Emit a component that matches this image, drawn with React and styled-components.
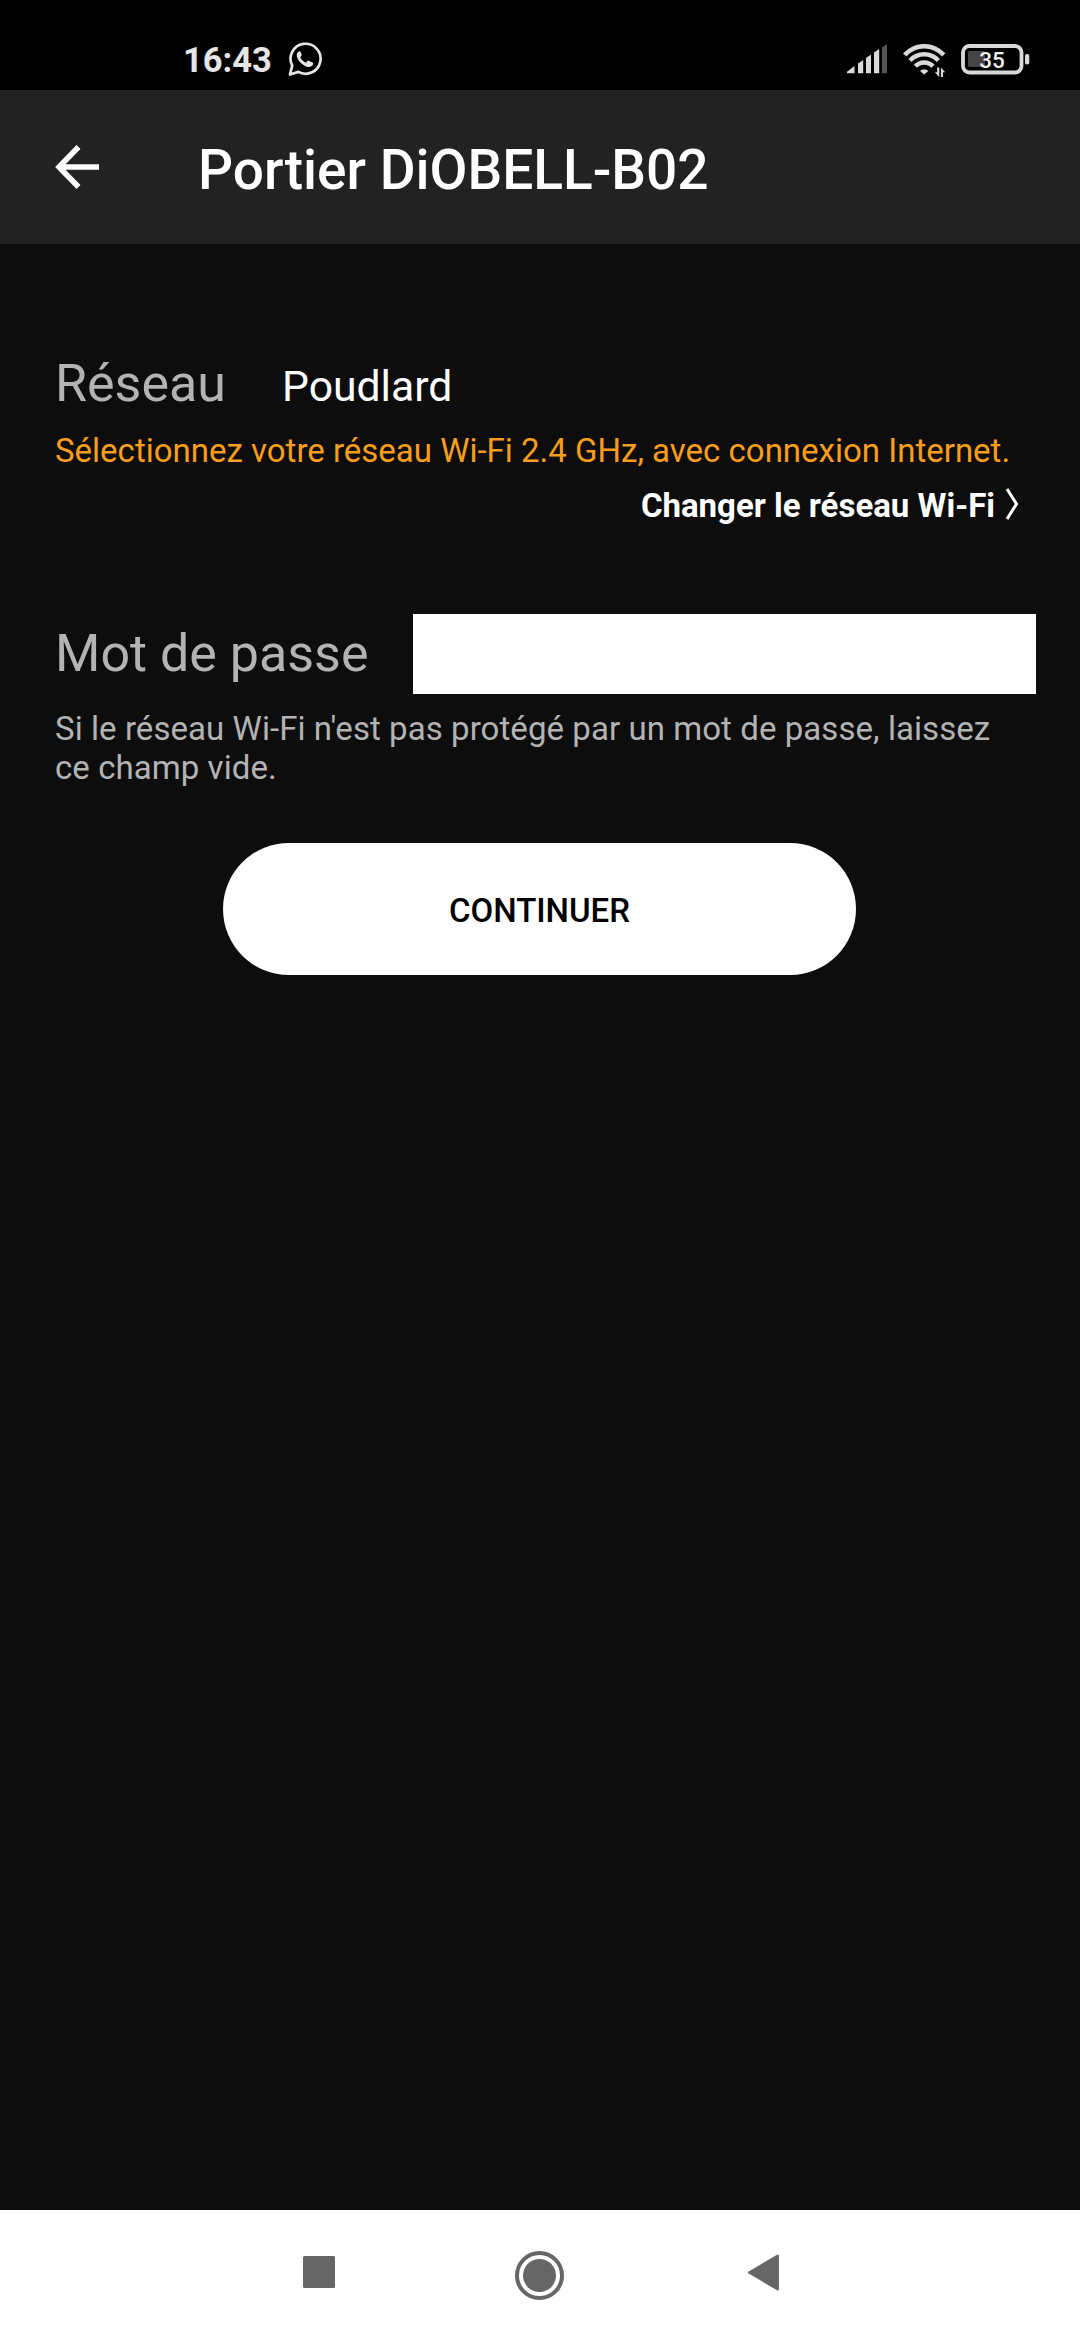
import React from "react";
import styled, { createGlobalStyle } from "styled-components";

const GlobalStyle = createGlobalStyle`
  * { box-sizing: border-box; }
  body { margin: 0; background: #0d0d0d; font-family: Roboto, "Liberation Sans", sans-serif; }
  h1, p { margin: 0; }
`;

const Screen = styled.div`
  width: 1080px;
  height: 2340px;
  display: flex;
  flex-direction: column;
  background: #0d0d0d;
  overflow: hidden;
`;

const StatusBar = styled.header`
  height: 90px;
  flex: none;
  display: flex;
  justify-content: space-between;
  align-items: flex-start;
  padding: 40px 50px 0 183px;
  background: #000;
`;

const StatusGroup = styled.div`
  display: flex;
  align-items: flex-start;
`;

const StatusIcon = styled.span`
  display: flex;
  margin-left: ${(p) => p.$gap}px;
  padding-top: ${(p) => p.$drop}px;
`;

const Clock = styled.span`
  width: 89px;
  font-size: 34.5px;
  font-weight: 700;
  line-height: 40px;
  color: #e6e6e6;
`;

const Toolbar = styled.div`
  height: 154px;
  flex: none;
  display: flex;
  align-items: flex-start;
  gap: 98px;
  padding: 48px 55px 0 55px;
  background: #222;
`;

const IconButton = styled.button`
  border: 0;
  padding: 7px 0 0;
  background: none;
  display: flex;
`;

const Title = styled.h1`
  font-size: 55px;
  font-weight: 500;
  line-height: 64px;
  color: #fff;
`;

const Content = styled.main`
  flex: 1;
  display: flex;
  flex-direction: column;
  padding: 109px 44px 0 55px;
`;

const FieldRow = styled.div`
  display: flex;
  align-items: ${(p) => p.$align};
  height: ${(p) => p.$height}px;
  margin-top: ${(p) => p.$top || 0}px;
`;

const Label = styled.label`
  width: ${(p) => p.$width}px;
  flex: none;
  margin-bottom: 1px;
  font-size: 52px;
  line-height: 61px;
  color: #b3b3b3;
  white-space: nowrap;
`;

const NetworkName = styled.span`
  font-size: 42.7px;
  line-height: 52px;
  color: #fff;
`;

const Note = styled.p`
  max-width: 965px;
  font-size: 33px;
  line-height: 39px;
  letter-spacing: ${(p) => p.$tracking || 0}px;
  margin-top: ${(p) => p.$top}px;
  color: ${(p) => p.$color};
`;

const ChangeLink = styled.a`
  display: flex;
  justify-content: flex-end;
  gap: 10px;
  height: 39px;
  margin-top: 16px;
  padding-right: 17px;
  font-size: 33px;
  font-weight: 700;
  line-height: 39px;
  color: #fff;
`;

const PasswordInput = styled.input`
  width: 623px;
  height: 80px;
  border: 0;
  border-radius: 0;
  padding: 0 12px;
  background: #fff;
  font: 400 44px Roboto, sans-serif;
`;

const ContinueButton = styled.button`
  align-self: flex-start;
  width: 633px;
  height: 132px;
  margin: 56px 0 0 168px;
  padding: 3px 0 0;
  border: 0;
  border-radius: 66px;
  background: #fff;
  color: #000;
  font: 500 33px/39px Roboto, sans-serif;
`;

const NavBar = styled.nav`
  height: 130px;
  flex: none;
  display: flex;
  align-items: flex-start;
  padding: 41px 0 0 303px;
  background: #fff;
`;

const NavItem = styled.span`
  display: flex;
  width: ${(p) => p.$width}px;
  padding-top: ${(p) => p.$drop}px;
`;

function WhatsAppIcon() {
  return (
    <svg width="36" height="36" viewBox="0 0 36 36" fill="none">
      <path
        d="M2 32.500L4.200 23.600A15 15 0 1 1 10.300 29.900Z"
        stroke="#e6e6e6"
        strokeWidth="2.700"
        strokeLinejoin="round"
      />
      <path
        d="M12.300 9.300c-.9-.4-2 .2-2.800 1.400-1.100 1.600-.9 3.800.1 5.800 1.700 3.500 4.900 6.500 8.500 7.900 2.500.9 4.900.7 6.300-.8.8-1 1-2.200.6-2.900l-4.200-2c-.6-.3-1 0-1.500.6l-1.300 1.500c-2.500-1-4.600-3-5.800-5.500l1.200-1.500c.4-.5.4-1 .2-1.500z"
        fill="#e6e6e6"
      />
    </svg>
  );
}

function SignalIcon() {
  return (
    <svg width="41" height="30" viewBox="0 0 41 30" fill="#d9d9d9">
      <path d="M0 29.300v-1.500L7.500 22v7.300z" />
      <path d="M11 29.300V19.500l5.200-3.500v13.300z" />
      <path d="M19 29.300V14l5-3.500v18.800z" />
      <path d="M27 29.300V8.500L32.200 5v24.300z" />
      <path d="M35 29.300V3.500L40 0v29.300z" fill="#555" />
    </svg>
  );
}

function WifiIcon() {
  return (
    <svg width="44" height="34" viewBox="0 0 44 34" fill="none" stroke="#d9d9d9" strokeWidth="4.500">
      <path d="M1.600 10.900Q10 2.200 21.200 2.200T40.800 10.900" />
      <path d="M7 16.500Q13 10.300 21.200 10.300T35.400 16.500" />
      <path d="M12.400 22.200Q16 18.400 21.200 18.400T30 22.200" />
      <path d="M17 26.900q4.200-3.400 8.400 0L21.200 30.500z" fill="#d9d9d9" stroke="none" />
      <path d="M36.300 23.500v9.500l-4.500-4.800h2.300v-4.700zM37.900 33v-9.500l4.300 4.800h-2.200V33z" fill="#d9d9d9" stroke="none" />
    </svg>
  );
}

function BatteryIcon() {
  return (
    <svg width="69" height="31" viewBox="0 0 69 31">
      <rect x="2" y="2" width="58.500" height="26.500" rx="6.500" fill="none" stroke="#d9d9d9" strokeWidth="3.800" />
      <rect x="7" y="7" width="17" height="16" rx="1.500" fill="#454545" />
      <rect x="64" y="10" width="4.300" height="10.500" rx="2" fill="#d9d9d9" />
      <text x="31" y="23.700" textAnchor="middle" fontFamily="Roboto, sans-serif" fontWeight="500" fontSize="22.500" fill="#f0f0f0">
        35
      </text>
    </svg>
  );
}

function BackArrowIcon() {
  return (
    <svg width="45" height="45" viewBox="0 0 45 45" fill="none" stroke="#fff" strokeWidth="5.500">
      <path d="M44 22H4M23.500 2L4 22L23.500 42" />
    </svg>
  );
}

function ChevronIcon() {
  return (
    <svg width="14" height="36" viewBox="0 0 14 36" fill="none" stroke="#fff" strokeWidth="3">
      <path d="M2 3L11.500 18L2 33" />
    </svg>
  );
}

export default function App() {
  return (
    <>
      <GlobalStyle />
      <Screen>
        <StatusBar>
          <StatusGroup>
            <Clock>16:43</Clock>
            <StatusIcon $gap={16} $drop={2}>
              <WhatsAppIcon />
            </StatusIcon>
          </StatusGroup>
          <StatusGroup>
            <StatusIcon $gap={0} $drop={4}>
              <SignalIcon />
            </StatusIcon>
            <StatusIcon $gap={15} $drop={4}>
              <WifiIcon />
            </StatusIcon>
            <StatusIcon $gap={14} $drop={4}>
              <BatteryIcon />
            </StatusIcon>
          </StatusGroup>
        </StatusBar>
        <Toolbar>
          <IconButton aria-label="Retour">
            <BackArrowIcon />
          </IconButton>
          <Title>Portier DiOBELL-B02</Title>
        </Toolbar>
        <Content>
          <FieldRow $align="baseline" $height={61}>
            <Label as="span" $width={227}>Réseau</Label>
            <NetworkName>Poudlard</NetworkName>
          </FieldRow>
          <Note $top={17} $color="#f99d1c">
            Sélectionnez votre réseau Wi-Fi 2.4 GHz, avec connexion Internet.
          </Note>
          <ChangeLink>
            Changer le réseau Wi-Fi
            <ChevronIcon />
          </ChangeLink>
          <FieldRow $align="center" $height={80} $top={89}>
            <Label htmlFor="password" $width={358}>Mot de passe</Label>
            <PasswordInput id="password" type="password" />
          </FieldRow>
          <Note $top={15} $color="#b3b3b3" $tracking={0.065}>
            Si le réseau Wi-Fi n'est pas protégé par un mot de passe, laissez ce champ vide.
          </Note>
          <ContinueButton>CONTINUER</ContinueButton>
        </Content>
        <NavBar>
          <NavItem $width={212} $drop={5}>
            <svg width="32" height="32">
              <rect width="32" height="32" rx="1.500" fill="#666" />
            </svg>
          </NavItem>
          <NavItem $width={233} $drop={0}>
            <svg width="49" height="49">
              <circle cx="24.500" cy="24.500" r="22.500" fill="none" stroke="#666" strokeWidth="4" />
              <circle cx="24.500" cy="24.500" r="16.500" fill="#666" />
            </svg>
          </NavItem>
          <NavItem $width={32} $drop={3}>
            <svg width="32" height="37">
              <path d="M1.300 18.500L29.700 1.800V35.200z" fill="#666" stroke="#666" strokeWidth="2.500" strokeLinejoin="round" />
            </svg>
          </NavItem>
        </NavBar>
      </Screen>
    </>
  );
}
